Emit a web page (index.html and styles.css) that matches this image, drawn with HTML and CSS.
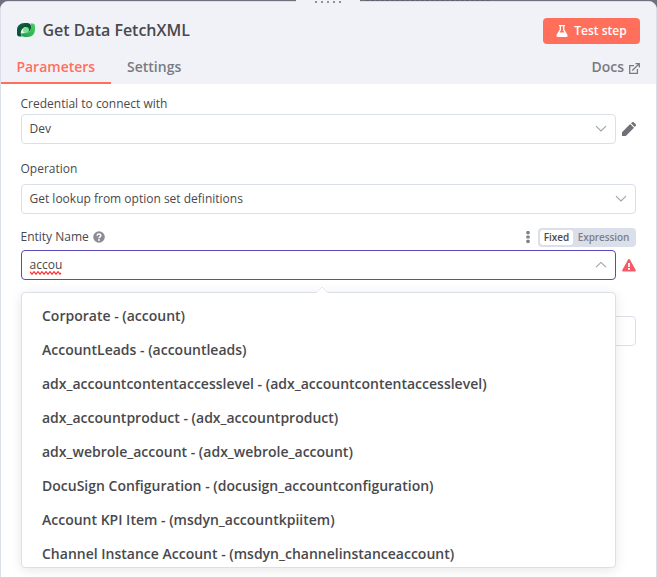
FILE: index.html
```html
<!DOCTYPE html>
<html lang="en">
<head>
<meta charset="utf-8">
<title>Get Data FetchXML</title>
<link rel="stylesheet" href="styles.css">
</head>
<body>
<div class="backdrop-marks"></div>
<main class="panel">
  <div class="drag"><i></i><i></i><i></i><i></i><i></i></div>
  <header class="header">
    <div class="title-row">
      <svg class="logo" viewBox="0 0 18 14" width="18" height="14">
        <defs>
          <linearGradient id="dark" x1="0" y1="0" x2="1" y2="1"><stop offset="0" stop-color="#0b6a40"/><stop offset=".5" stop-color="#075033"/><stop offset="1" stop-color="#12803f"/></linearGradient>
          <linearGradient id="light" x1="0" y1="1" x2="1" y2="0"><stop offset="0" stop-color="#17a049"/><stop offset="1" stop-color="#4fd060"/></linearGradient>
        </defs>
        <path d="M13 .6H15.6C17.2 .6 18 1.8 18 3.6V6.5C18 11 15 14 10.5 14H8C5.5 14 4 12.5 4 10.5L9 10C12 10 14.4 7 14.2 4 14.1 2.5 13.8 1.4 13 .6Z" fill="url(#light)"/>
        <path d="M5 13.4H2.4C.8 13.4 0 12.2 0 10.4V7C0 3 3 0 7.5 0H10c2.6 0 4.2 1.7 4.2 4.2C14.2 7 12 9.8 9 10V4C6.5 4 4 6.5 3.8 9.8 3.7 11.4 4.2 12.6 5 13.4Z" fill="url(#dark)"/>
        <circle cx="9" cy="7" r="3" fill="#7be092"/>
      </svg>
      <h1>Get Data FetchXML</h1>
      <button class="test">
        <svg viewBox="0 0 12 12" width="12" height="12"><path fill="#fff" fill-rule="evenodd" d="M3 0h6v1.3h-.7v3.3l3.1 5.2c.6 1.1 0 2.2-1.1 2.2H1.7C.6 12 0 10.9.6 9.8l3.1-5.2V1.3H3ZM5 1.3V5L3.6 7.4h4.8L7 5V1.3Z"/></svg>
        <span>Test step</span>
      </button>
    </div>
    <nav class="tabs">
      <a class="tab active">Parameters</a>
      <a class="tab">Settings</a>
      <a class="docs">Docs
        <svg viewBox="0 0 11 11" width="11" height="11" fill="none" stroke="#7a7b80" stroke-width="1.3"><path d="M5 2.6H.7v7.7h7.7V6M3.3 7.5 10 .9M6.5.7h3.8v3.8"/></svg>
      </a>
    </nav>
  </header>
  <section class="form">
    <label class="label first">Credential to connect with</label>
    <div class="row">
      <div class="select"><span>Dev</span><svg class="chev" viewBox="0 0 12 8" width="12" height="8"><path d="m1 1.2 5 4.8 5-4.8"/></svg></div>
      <svg class="side pencil" viewBox="0 0 14 14" width="14" height="14" fill="#707177"><path d="M0 14v-3.8L8.2 2 12 5.8 3.8 14ZM9 1.2 9.8.5c.7-.7 1.5-.7 2.2 0l1.5 1.5c.7.7.7 1.5 0 2.2l-.7.8Z"/></svg>
    </div>
    <label class="label second">Operation</label>
    <div class="row">
      <div class="select"><span>Get lookup from option set definitions</span><svg class="chev" viewBox="0 0 12 8" width="12" height="8"><path d="m1 1.2 5 4.8 5-4.8"/></svg></div>
    </div>
    <div class="label third">
      <span>Entity Name</span>
      <svg class="help" viewBox="0 0 12 12" width="12" height="12"><circle cx="6" cy="6" r="5.8" fill="#8c8d94"/><path d="M4.1 4.7C4.2 2.4 7.9 2.5 7.8 4.6 7.8 5.8 6 5.8 6 7.2" fill="none" stroke="#fff" stroke-width="1.5"/><circle cx="6" cy="9" r=".95" fill="#fff"/></svg>
      <svg class="dots" viewBox="0 0 4 12" width="4" height="12" fill="#7d7e87"><rect x=".3" y="0" width="3.4" height="3.2" rx="1"/><rect x=".3" y="4.4" width="3.4" height="3.2" rx="1"/><rect x=".3" y="8.8" width="3.4" height="3.2" rx="1"/></svg>
      <div class="switch"><b>Fixed</b><span>Expression</span></div>
    </div>
    <div class="row">
      <div class="select focus"><span class="typed">accou<svg class="squiggle" viewBox="0 0 33 4" width="33" height="4"><path d="m0 .7 2 2.5 2-2.5 2 2.5 2-2.5 2 2.5 2-2.5 2 2.5 2-2.5 2 2.5 2-2.5 2 2.5 2-2.5 2 2.5 2-2.5 2 2.5 1-1.3" fill="none" stroke="#f33" stroke-width="1.2"/></svg></span><svg class="chev" viewBox="0 0 12 8" width="12" height="8"><path d="m1 6.2 5-4.8 5 4.8"/></svg></div>
      <svg class="side" viewBox="0 0 14 13" width="14" height="13"><path d="M6.1.6c.4-.7 1.4-.7 1.8 0l5.8 10.3c.4.8 0 1.6-.9 1.6H1.2c-.9 0-1.3-.8-.9-1.6Z" fill="#f45b69"/><path d="M6 4h2l-.2 4H6.2ZM6.1 8.9h1.8v1.8H6.1Z" fill="#fff"/></svg>
    </div>
    <div class="select covered"></div>
  </section>
  <div class="menu">
    <svg class="arrow" viewBox="0 0 14 8" width="14" height="8"><path d="M1 7.5 7 1l6 6.5V8H1Z" fill="#fff"/><path d="M1 7.2 7 1l6 6.2" fill="none" stroke="#e8eaf1"/></svg>
    <ul>
      <li>Corporate - (account)</li>
      <li>AccountLeads - (accountleads)</li>
      <li>adx_accountcontentaccesslevel - (adx_accountcontentaccesslevel)</li>
      <li>adx_accountproduct - (adx_accountproduct)</li>
      <li>adx_webrole_account - (adx_webrole_account)</li>
      <li>DocuSign Configuration - (docusign_accountconfiguration)</li>
      <li>Account KPI Item - (msdyn_accountkpiitem)</li>
      <li>Channel Instance Account - (msdyn_channelinstanceaccount)</li>
    </ul>
  </div>
</main>
</body>
</html>
```
FILE: styles.css
```css
* { box-sizing: border-box; }
body {
  margin: 0;
  height: 577px;
  padding-top: 1px;
  overflow: hidden;
  position: relative;
  background: #716e7d;
  font-family: "Open Sans", sans-serif;
  color: #48494d;
}
.backdrop-marks {
  position: absolute;
  top: 0;
  left: 366px;
  width: 124px;
  height: 1px;
  background: repeating-linear-gradient(90deg, #625f70 0 3px, #716e7d 3px 5px);
}
.panel {
  height: 590px;
  border: 1px solid #dbdfe9;
  border-radius: 8px 8px 0 0;
  background: #fff;
}
.drag {
  position: absolute;
  top: 0;
  left: 296px;
  width: 64px;
  height: 4px;
  display: flex;
  gap: 4px;
  padding: 1px 0 0 19px;
  background: #f1f2f8;
}
.drag i { width: 2px; height: 2px; background: #909097; }
.header {
  height: 82px;
  background: #f1f2f8;
  border-radius: 7px 7px 0 0;
}
.title-row {
  height: 51px;
  padding: 7px 16px 0 16px;
  display: flex;
  align-items: center;
}
.logo { margin-top: -3px; }
h1 {
  margin: -2px auto 0 7.5px;
  font-size: 16px;
  line-height: 22px;
  font-weight: 600;
  letter-spacing: -.02px;
}
.test {
  width: 97px;
  height: 26px;
  border: 0;
  border-radius: 4px;
  padding: 0;
  display: flex;
  justify-content: center;
  align-items: center;
  gap: 6px;
  background: #ff6f5c;
  color: #fff;
  font: 600 12px/16px "Open Sans", sans-serif;
}
.tabs {
  height: 31px;
  display: flex;
  font-size: 14px;
  line-height: 20px;
  font-weight: 600;
  color: #7a7b80;
}
.tab { padding: 4px 16px 5px 16px; }
.active { width: 110px; padding-left: 15.4px; padding-right: 0; color: #ff6f5c; border-bottom: 2px solid #ff6f5c; }
.docs { margin-left: auto; padding: 4px 16px 0 0; display: flex; gap: 5px; }
.docs svg { margin-top: 6px; }
.form { padding: 0 20px; font-size: 12px; }
.label { display: flex; align-items: center; height: 20px; line-height: 20px; margin-left: -.5px; }
.first { margin-top: 10px; }
.second { margin-top: 15px; margin-bottom: 5px; }
.third { margin-top: 13px; margin-bottom: 3px; }
.help { margin-left: 4.5px; }
.dots { margin-left: auto; margin-right: 8px; }
.switch {
  width: 98px;
  height: 19px;
  padding: 2px;
  display: flex;
  border-radius: 4px;
  background: #dbdfe9;
  font-size: 10px;
  line-height: 15px;
  font-weight: 600;
  color: #7e8088;
}
.switch b { width: 33px; text-align: center; background: #fff; border-radius: 3px; font-weight: 600; color: #48494d; }
.switch span { flex: 1; text-align: center; letter-spacing: -.1px; }
.row { display: flex; align-items: center; gap: 6px; }
.select {
  flex: 1;
  height: 30px;
  padding: 0 8px 0 7.5px;
  display: flex;
  justify-content: space-between;
  align-items: center;
  border: 1px solid #dbdfe9;
  border-radius: 4px;
  background: #fff;
  line-height: 18px;
}
.select.focus { border-color: #5c4ab9; }
.chev { fill: none; stroke: #a0a1a7; stroke-width: 1.1; }
.typed { position: relative; }
.squiggle { position: absolute; left: 0; bottom: -1px; }
.covered { margin-top: 36px; }
.menu {
  position: absolute;
  left: 21px;
  top: 292px;
  width: 595px;
  height: 276px;
  border: 1px solid #dbdfe9;
  border-radius: 4px;
  background: #fff;
  box-shadow: 0 2px 12px rgba(0, 0, 0, .1);
}
.arrow { position: absolute; left: 293px; top: -7px; }
ul {
  list-style: none;
  margin: 0;
  padding: 6px 20px 0;
  height: 274px;
  overflow: hidden;
}
li { font-size: 14px; line-height: 34px; font-weight: 600; white-space: nowrap; }
```
